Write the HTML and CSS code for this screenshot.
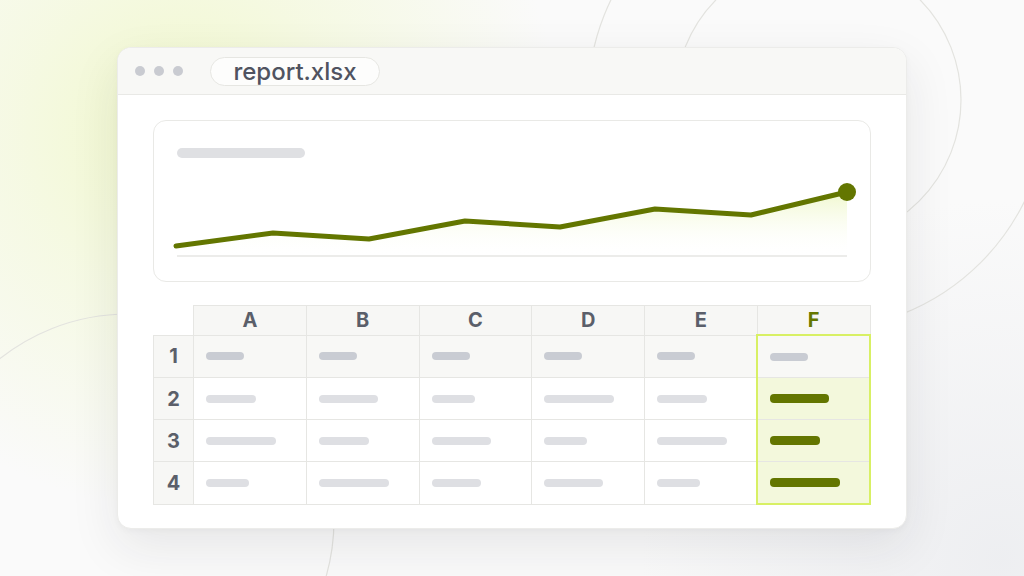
FILE: index.html
```html
<!DOCTYPE html>
<html lang="en">
<head>
    <meta charset="UTF-8">
    <meta name="viewport" content="width=device-width, initial-scale=1.0">
    <title>report.xlsx</title>
    <link rel="stylesheet" href="styles.css">
</head>
<body>

<!-- decorative rings behind the window -->
<svg class="backdrop" width="1024" height="576" viewBox="0 0 1024 576">
    <circle cx="818" cy="100" r="143" />
    <circle cx="818" cy="100" r="230" />
    <circle cx="128" cy="520" r="206" />
</svg>

<div class="window">
    <div class="titlebar">
        <div class="dots">
            <span></span><span></span><span></span>
        </div>
        <div class="filename">report.xlsx</div>
    </div>

    <div class="content">
        <div class="chart-card">
            <div class="chart-title"></div>
            <svg class="chart" width="680" height="82" viewBox="0 0 680 82">
                <defs>
                    <linearGradient id="fill" x1="0" y1="0" x2="0" y2="1">
                        <stop offset="0" stop-color="#eef7c8" stop-opacity="0.9" />
                        <stop offset="1" stop-color="#ffffff" stop-opacity="0" />
                    </linearGradient>
                </defs>
                <polygon fill="url(#fill)" points="0,65 97,52 193,58 289,40 384,46 479,28 575,34 671,11 671,75 0,75" />
                <line x1="1" y1="75" x2="671" y2="75" stroke="#e6e6e3" stroke-width="1.5" />
                <polyline fill="none" stroke="#637600" stroke-width="5" stroke-linecap="round" stroke-linejoin="round"
                          points="0,65 97,52 193,58 289,40 384,46 479,28 575,34 671,11" />
                <circle cx="671" cy="11" r="9" fill="#637600" />
            </svg>
        </div>

        <table class="sheet">
            <colgroup>
                <col class="num-col">
                <col><col><col><col><col><col>
            </colgroup>
            <tr class="head">
                <th class="corner"></th>
                <th>A</th><th>B</th><th>C</th><th>D</th><th>E</th><th class="col-f">F</th>
            </tr>
            <tr class="first">
                <th>1</th>
                <td><span class="bar w38"></span></td>
                <td><span class="bar w38"></span></td>
                <td><span class="bar w38"></span></td>
                <td><span class="bar w38"></span></td>
                <td><span class="bar w38"></span></td>
                <td class="pick top"><span class="bar w38"></span></td>
            </tr>
            <tr>
                <th>2</th>
                <td><span class="bar w50"></span></td>
                <td><span class="bar w59"></span></td>
                <td><span class="bar w43"></span></td>
                <td><span class="bar w70"></span></td>
                <td><span class="bar w50"></span></td>
                <td class="pick on"><span class="bar w59"></span></td>
            </tr>
            <tr>
                <th>3</th>
                <td><span class="bar w70"></span></td>
                <td><span class="bar w50"></span></td>
                <td><span class="bar w59"></span></td>
                <td><span class="bar w43"></span></td>
                <td><span class="bar w70"></span></td>
                <td class="pick on"><span class="bar w50"></span></td>
            </tr>
            <tr>
                <th>4</th>
                <td><span class="bar w43"></span></td>
                <td><span class="bar w70"></span></td>
                <td><span class="bar w49"></span></td>
                <td><span class="bar w59"></span></td>
                <td><span class="bar w43"></span></td>
                <td class="pick on bottom"><span class="bar w70"></span></td>
            </tr>
        </table>
    </div>
</div>

</body>
</html>
```

FILE: styles.css
```css
html, body {
    margin: 0;
    height: 100%;
}
body {
    width: 1024px;
    height: 576px;
    overflow: hidden;
    position: relative;
    font-family: Inter, "Noto Sans", Arial, sans-serif;
    background-color: #fafafa;
    background-image:
        radial-gradient(ellipse 380px 380px at 180px 130px, rgba(241, 248, 204, 1) 0, rgba(244, 249, 220, 0.75) 45%, rgba(250, 250, 250, 0) 100%),
        radial-gradient(circle at 1000px 560px, rgba(236, 237, 240, 0.9) 0, rgba(250, 250, 250, 0) 360px);
}
.backdrop {
    position: absolute;
    left: 0;
    top: 0;
    z-index: 0;
}
.backdrop circle {
    fill: none;
    stroke: #e3e3df;
    stroke-width: 1.2;
}
.window {
    position: relative;
    z-index: 1;
    width: 790px;
    height: 482px;
    margin: 47px 0 0 117px;
    box-sizing: border-box;
    background-color: #fff;
    border: 1px solid #ececea;
    border-radius: 14px;
    box-shadow: 0 18px 50px rgba(30, 32, 40, 0.09), 0 2px 6px rgba(30, 32, 40, 0.03);
    overflow: hidden;
}
.titlebar {
    height: 47px;
    box-sizing: border-box;
    background-color: #f8f8f6;
    border-bottom: 1px solid #e9e9e6;
    display: flex;
    align-items: center;
    padding-left: 17px;
    gap: 27px;
}
.dots {
    display: flex;
    gap: 9px;
}
.dots span {
    width: 10px;
    height: 10px;
    border-radius: 50%;
    background-color: #c9cbd1;
}
.filename {
    height: 29px;
    box-sizing: border-box;
    width: 170px;
    border: 1.5px solid #e6e6e2;
    border-radius: 15px;
    background-color: #fdfdfc;
    color: #505360;
    font-size: 24px;
    font-weight: 500;
    display: flex;
    align-items: center;
    justify-content: center;
}
.content {
    padding: 25px 35px 0;
    display: flex;
    flex-direction: column;
    gap: 23px;
}
.chart-card {
    height: 162px;
    box-sizing: border-box;
    border: 1.5px solid #e9e9e6;
    border-radius: 13px;
    padding: 27px 0 0 22px;
}
.chart-title {
    width: 128px;
    height: 10px;
    margin-left: 1px;
    border-radius: 5px;
    background-color: #dfe0e3;
}
.chart {
    display: block;
    margin-top: 23px;
    overflow: visible;
}
.sheet {
    border-collapse: collapse;
    table-layout: fixed;
    width: 718px;
}
.num-col {
    width: 40px;
}
.sheet th, .sheet td {
    border: 1px solid #e6e6e3;
    padding: 0;
}
.sheet th {
    font-size: 20px;
    font-weight: 700;
    color: #5b5f6a;
    background-color: #f7f7f5;
    text-align: center;
}
.sheet .head th {
    height: 28px;
    line-height: 28px;
}
.sheet .head th.corner {
    background: none;
    border-top: none;
    border-left: none;
}
.sheet .head th.col-f {
    color: #657800;
}
.sheet td {
    height: 41px;
    padding-left: 12px;
    background-color: #fff;
}
.sheet tr.first td {
    background-color: #f8f8f6;
}
.bar {
    display: block;
    height: 8px;
    border-radius: 4px;
    background-color: #dedfe3;
}
.first .bar {
    background-color: #c9ccd3;
}
.w38 { width: 38px; }
.w43 { width: 43px; }
.w49 { width: 49px; }
.w50 { width: 50px; }
.w59 { width: 59px; }
.w70 { width: 70px; }
.sheet td.pick {
    border-left: 2px solid #d8f064;
    border-right: 2px solid #d8f064;
}
.sheet td.pick.top {
    border-top: 2px solid #d8f064;
}
.sheet td.pick.bottom {
    border-bottom: 2px solid #d8f064;
}
.sheet td.on {
    background-color: #f3f8dc;
}
.sheet td.on .bar {
    height: 9px;
    background-color: #637600;
}
```
